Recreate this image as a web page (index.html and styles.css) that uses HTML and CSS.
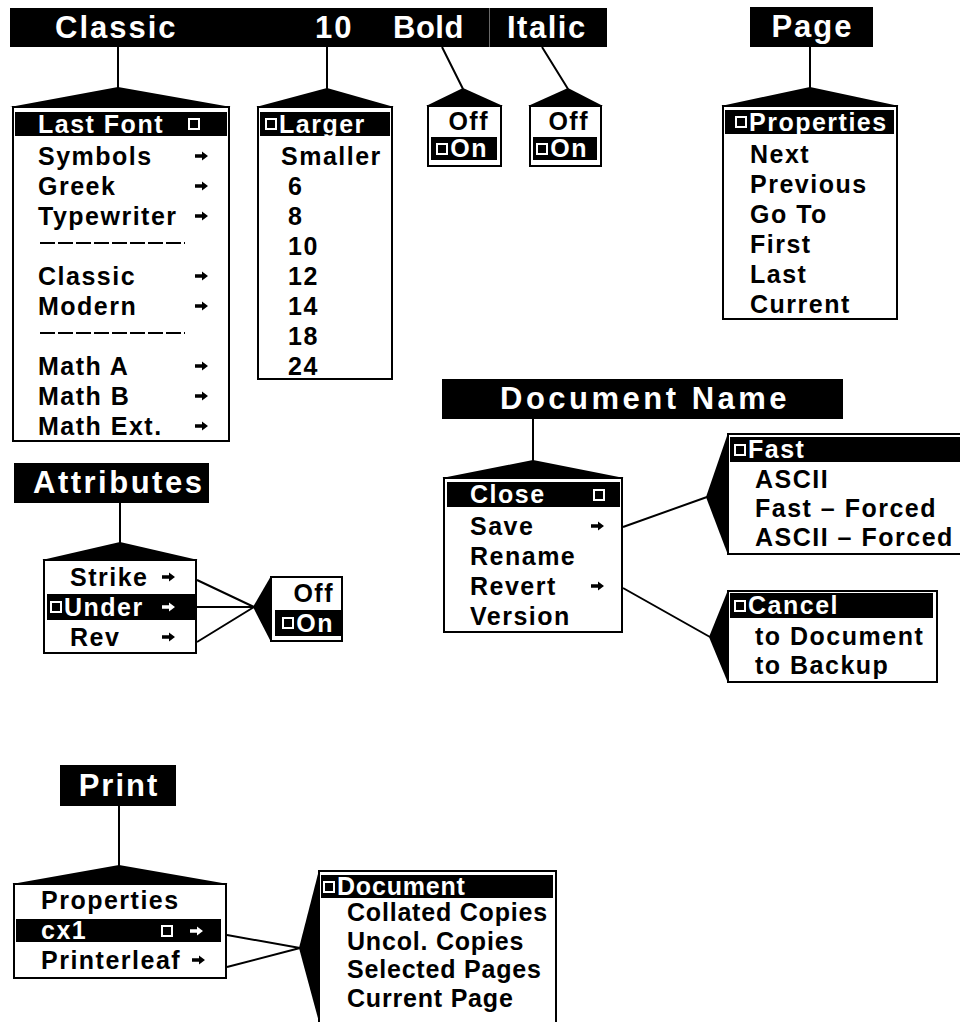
FILE: index.html
```html
<!DOCTYPE html>
<html lang="en">
<head>
    <meta charset="UTF-8">
    <meta name="viewport" content="width=device-width, initial-scale=1.0">
    <title>Menus</title>
    <link rel="stylesheet" href="styles.css">
</head>
<body>
    <svg class="defs" width="0" height="0">
        <symbol id="arrow" viewBox="0 0 13 10"><path d="M0 3.3h7V0.5l6 4.5-6 4.5V6.7H0z"/></symbol>
    </svg>

    <div class="canvas">
        <!-- connecting lines and pointers -->
        <svg class="wires" width="960" height="1022" viewBox="0 0 960 1022">
            <g fill="none" stroke="#000" stroke-width="2">
                <path d="M118 47V88M327 47V89M442 47L463 89M542 47L568 89M810 47V88"/>
                <path d="M120 503V543"/>
                <path d="M197 580L254 607M197 607H254M197 642L254 607"/>
                <path d="M533 419V461"/>
                <path d="M623 527L707 497M623 588L710 637"/>
                <path d="M119 805V866"/>
                <path d="M227 935L300 948M227 967L300 948"/>
            </g>
            <g fill="#000">
                <polygon points="118,87 10,107 231,107"/>
                <polygon points="327,88 256,107 394,107"/>
                <polygon points="463,88 426,106 503,106"/>
                <polygon points="568,88 528,106 603,106"/>
                <polygon points="810,87 721,106 899,106"/>
                <polygon points="120,542 42,560 198,560"/>
                <polygon points="253,607 271,576 271,642"/>
                <polygon points="533,460 442,478 624,478"/>
                <polygon points="706,497 728,433 728,555"/>
                <polygon points="709,637 728,590 728,683"/>
                <polygon points="119,865 12,884 228,884"/>
                <polygon points="299,948 319,870 319,1022"/>
            </g>
        </svg>

        <!-- title bars -->
        <div class="bar bar-font">
            <span class="seg seg-classic">Classic</span>
            <span class="seg seg-size">10</span>
            <span class="seg seg-bold">Bold</span>
            <span class="seg seg-italic">Italic</span>
        </div>
        <div class="bar bar-page">Page</div>
        <div class="bar bar-attr">Attributes</div>
        <div class="bar bar-doc">Document Name</div>
        <div class="bar bar-print">Print</div>

        <!-- font -->
        <div class="menu m-font">
            <div class="row on"><span class="txt">Last Font</span><i class="sq"></i></div>
            <div class="row"><span class="txt">Symbols</span><svg class="arr"><use href="#arrow"/></svg></div>
            <div class="row"><span class="txt">Greek</span><svg class="arr"><use href="#arrow"/></svg></div>
            <div class="row"><span class="txt">Typewriter</span><svg class="arr"><use href="#arrow"/></svg></div>
            <div class="row sep"></div>
            <div class="row"><span class="txt">Classic</span><svg class="arr"><use href="#arrow"/></svg></div>
            <div class="row"><span class="txt">Modern</span><svg class="arr"><use href="#arrow"/></svg></div>
            <div class="row sep"></div>
            <div class="row"><span class="txt">Math A</span><svg class="arr"><use href="#arrow"/></svg></div>
            <div class="row"><span class="txt">Math B</span><svg class="arr"><use href="#arrow"/></svg></div>
            <div class="row"><span class="txt">Math Ext.</span><svg class="arr"><use href="#arrow"/></svg></div>
        </div>

        <!-- size -->
        <div class="menu m-size">
            <div class="row on"><i class="sq lead"></i>Larger</div>
            <div class="row sm">Smaller</div>
            <div class="row">6</div>
            <div class="row">8</div>
            <div class="row">10</div>
            <div class="row">12</div>
            <div class="row">14</div>
            <div class="row">18</div>
            <div class="row">24</div>
        </div>

        <!-- bold / italic -->
        <div class="menu m-tog m-bold">
            <div class="row">Off</div>
            <div class="row on"><i class="sq lead"></i>On</div>
        </div>
        <div class="menu m-tog m-italic">
            <div class="row">Off</div>
            <div class="row on"><i class="sq lead"></i>On</div>
        </div>

        <!-- page -->
        <div class="menu m-page">
            <div class="row on"><i class="sq lead"></i>Properties</div>
            <div class="row">Next</div>
            <div class="row">Previous</div>
            <div class="row">Go To</div>
            <div class="row">First</div>
            <div class="row">Last</div>
            <div class="row">Current</div>
        </div>

        <!-- attributes -->
        <div class="menu m-attr">
            <div class="row"><span class="txt">Strike</span><svg class="arr"><use href="#arrow"/></svg></div>
            <div class="row on"><i class="sq lead"></i><span class="txt">Under</span><svg class="arr"><use href="#arrow"/></svg></div>
            <div class="row"><span class="txt">Rev</span><svg class="arr"><use href="#arrow"/></svg></div>
        </div>
        <div class="menu m-attrsub">
            <div class="row">Off</div>
            <div class="row on"><i class="sq lead"></i>On</div>
        </div>

        <!-- document -->
        <div class="menu m-doc">
            <div class="row on"><span class="txt">Close</span><i class="sq"></i></div>
            <div class="row"><span class="txt">Save</span><svg class="arr"><use href="#arrow"/></svg></div>
            <div class="row"><span class="txt">Rename</span></div>
            <div class="row"><span class="txt">Revert</span><svg class="arr"><use href="#arrow"/></svg></div>
            <div class="row"><span class="txt">Version</span></div>
        </div>
        <div class="menu m-fast">
            <div class="row on"><i class="sq lead"></i>Fast</div>
            <div class="row">ASCII</div>
            <div class="row">Fast – Forced</div>
            <div class="row">ASCII – Forced</div>
        </div>
        <div class="menu m-cancel">
            <div class="row on"><i class="sq lead"></i>Cancel</div>
            <div class="row">to Document</div>
            <div class="row">to Backup</div>
        </div>

        <!-- print -->
        <div class="menu m-print">
            <div class="row"><span class="txt">Properties</span></div>
            <div class="row on"><span class="txt">cx1</span><i class="sq"></i><svg class="arr"><use href="#arrow"/></svg></div>
            <div class="row"><span class="txt">Printerleaf</span><svg class="arr"><use href="#arrow"/></svg></div>
        </div>
        <div class="menu m-printsub">
            <div class="row on"><i class="sq lead"></i>Document</div>
            <div class="row">Collated Copies</div>
            <div class="row">Uncol. Copies</div>
            <div class="row">Selected Pages</div>
            <div class="row">Current Page</div>
        </div>
    </div>
</body>
</html>
```

FILE: styles.css
```css
/* base */
body {
    margin: 0;
    background: #fff;
    color: #000;
    font-family: "Liberation Sans", Arial, sans-serif;
    font-weight: bold;
}

.canvas {
    position: relative;
    width: 960px;
    height: 1022px;
    overflow: hidden;
}

.defs {
    position: absolute;
}

.wires {
    position: absolute;
    left: 0;
    top: 0;
}

/* title bars */
.bar {
    position: absolute;
    display: flex;
    box-sizing: border-box;
    height: 40px;
    line-height: 40px;
    background: #000;
    color: #fff;
    font-size: 31px;
    letter-spacing: 2px;
    white-space: nowrap;
}

.bar-font {
    left: 10px;
    top: 8px;
    width: 597px;
    height: 39px;
    line-height: 39px;
}

.seg {
    box-sizing: border-box;
}

.seg-classic { width: 280px; padding-left: 45px; }
.seg-size { width: 95px; padding-left: 25px; }
.seg-bold { width: 104px; padding-left: 8px; letter-spacing: 0.5px; }
.seg-italic { flex: 1; padding-left: 17px; border-left: 1px solid #6a6a6a; letter-spacing: 1.5px; }

.bar-page {
    left: 750px;
    top: 7px;
    width: 123px;
    justify-content: center;
    padding-left: 2px;
}

.bar-attr {
    left: 14px;
    top: 463px;
    width: 195px;
    padding-left: 19px;
    letter-spacing: 2.5px;
}

.bar-doc {
    left: 442px;
    top: 379px;
    width: 401px;
    padding-left: 58px;
    letter-spacing: 3.5px;
}

.bar-print {
    left: 60px;
    top: 765px;
    width: 116px;
    height: 41px;
    line-height: 41px;
    justify-content: center;
    padding-left: 2px;
}

/* menus */
.menu {
    position: absolute;
    box-sizing: border-box;
    border: 2px solid #000;
    background: #fff;
    font-size: 25px;
    letter-spacing: 1.5px;
}

.row {
    display: flex;
    align-items: center;
    box-sizing: border-box;
    height: 30px;
    line-height: 30px;
    white-space: nowrap;
}

.row.on {
    background: #000;
    color: #fff;
}

.txt {
    margin-right: auto;
}

.sq {
    display: inline-block;
    flex: none;
    width: 12px;
    height: 12px;
    border: 2px solid currentColor;
    box-sizing: border-box;
}

.sq.lead {
    margin-right: 2px;
}

.arr {
    flex: none;
    width: 13px;
    height: 10px;
    fill: currentColor;
}

.sep::before {
    content: "";
    width: 145px;
    height: 2px;
    margin-top: -6px;
    background: repeating-linear-gradient(90deg, #000 0 15px, transparent 15px 18px);
}

/* font */
.m-font { left: 12px; top: 106px; width: 218px; height: 336px; padding-top: 3px; }
.m-font .row { padding: 0 20px 0 24px; }
.m-font .row.on { margin: 1px 1px 5px; height: 24px; line-height: 24px; padding: 0 27px 0 23px; }
.m-font .sep { padding-left: 26px; }

/* size */
.m-size { left: 257px; top: 106px; width: 136px; height: 274px; padding-top: 3px; }
.m-size .row { padding-left: 29px; }
.m-size .row.sm { padding-left: 22px; }
.m-size .row.on { margin: 1px 1px 5px; height: 24px; line-height: 24px; padding-left: 5px; }

/* bold, italic */
.m-bold { left: 427px; top: 105px; width: 75px; height: 62px; }
.m-italic { left: 529px; top: 105px; width: 73px; height: 62px; }
.m-tog .row { height: 29px; line-height: 29px; justify-content: flex-end; padding-right: 11px; }
.m-tog .row.on { margin: 1px 3px 5px 2px; height: 23px; line-height: 23px; padding-right: 9px; }

/* page */
.m-page { left: 722px; top: 105px; width: 176px; height: 215px; padding-top: 2px; }
.m-page .row { padding-left: 26px; }
.m-page .row.on { margin: 1px 2px 5px 1px; height: 24px; line-height: 24px; padding-left: 10px; }

/* attributes */
.m-attr { left: 43px; top: 559px; width: 154px; height: 95px; padding-top: 1px; }
.m-attr .row { padding: 0 20px 0 25px; }
.m-attr .row.on { margin: 2px 0 2px 2px; height: 26px; line-height: 26px; padding: 0 20px 0 3px; }

.m-attrsub { left: 270px; top: 576px; width: 73px; height: 66px; }
.m-attrsub .row { height: 31px; line-height: 31px; justify-content: flex-end; padding-right: 7px; }
.m-attrsub .row.on { margin: 1px 0 4px 3px; height: 26px; line-height: 26px; }

/* document */
.m-doc { left: 443px; top: 477px; width: 180px; height: 156px; padding-top: 2px; }
.m-doc .row { padding: 0 17px 0 25px; }
.m-doc .row.on { margin: 1px 1px 4px 2px; height: 25px; line-height: 25px; padding: 0 15px 0 23px; }

.m-fast { left: 727px; top: 433px; width: 245px; height: 122px; padding-top: 1px; }
.m-fast .row { height: 29px; line-height: 29px; padding-left: 26px; }
.m-fast .row.on { margin: 1px 0 3px 1px; height: 25px; line-height: 25px; padding-left: 4px; }

.m-cancel { left: 727px; top: 590px; width: 211px; height: 93px; }
.m-cancel .row { height: 29px; line-height: 29px; padding-left: 26px; }
.m-cancel .row.on { margin: 1px 3px 4px 1px; height: 25px; line-height: 25px; padding-left: 4px; }

/* print */
.m-print { left: 13px; top: 883px; width: 214px; height: 96px; }
.m-print .row { padding: 0 20px 0 26px; }
.m-print .row.on { margin: 4px 4px 3px 1px; height: 23px; line-height: 23px; padding: 0 18px 0 25px; }
.m-print .on .sq { margin-right: 17px; }

.m-printsub { left: 318px; top: 870px; width: 239px; height: 170px; padding-top: 2px; letter-spacing: 0.8px; }
.m-printsub .row { height: 28.5px; line-height: 28.5px; padding-left: 27px; }
.m-printsub .row.on { margin: 1px 2px 0 1px; height: 23px; line-height: 23px; padding-left: 2px; }
```
